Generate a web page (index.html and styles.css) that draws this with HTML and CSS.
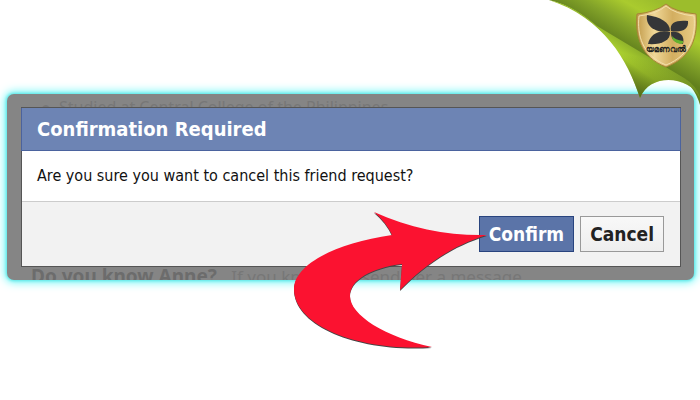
FILE: index.html
```html
<!DOCTYPE html>
<html lang="en">

<head>
    <meta charset="UTF-8">
    <meta name="viewport" content="width=device-width, initial-scale=1.0">
    <title>Confirmation Required</title>
    <link rel="stylesheet" href="styles.css">
</head>

<body>
    <main class="page">
        <div class="frame">
            <p class="behind behind-top">&#9679;&nbsp; Studied at Central College of the Philippines</p>
            <section class="dialog" role="dialog" aria-labelledby="dialogTitle">
                <h1 class="dialog-title" id="dialogTitle">Confirmation Required</h1>
                <p class="dialog-message">Are you sure you want to cancel this friend request?</p>
                <div class="dialog-buttons">
                    <button type="button" class="btn btn-confirm">Confirm</button>
                    <button type="button" class="btn btn-cancel">Cancel</button>
                </div>
            </section>
            <p class="behind behind-bottom"><b>Do you know Anne?</b> If you know her, send her a message.</p>
        </div>

        <!-- arrow pointing at the confirm button -->
        <svg class="arrow" viewBox="290 208 200 144" aria-hidden="true">
            <path d="M487 235C450 236 411 229 374 212Q386 222 392 235C335 243 294 265 294 289C294 326 360 352 432 347C385 337 350 315 350 296C350 280 371 268 402 264L400 290C422 268 448 247 487 235Z" />
        </svg>
    </main>

    <!-- page curl with logo -->
    <svg class="curl" viewBox="545 0 155 110" aria-hidden="true">
        <defs>
            <linearGradient id="back" gradientUnits="userSpaceOnUse" x1="618" y1="42" x2="645" y2="-6">
                <stop offset="0" stop-color="#62801d" />
                <stop offset=".35" stop-color="#83a329" />
                <stop offset=".7" stop-color="#aacb2e" />
                <stop offset="1" stop-color="#9cbd2c" />
            </linearGradient>
            <linearGradient id="fold" gradientUnits="userSpaceOnUse" x1="622" y1="80" x2="646" y2="46">
                <stop offset="0" stop-color="#8cae28" />
                <stop offset=".45" stop-color="#b0d62f" />
                <stop offset="1" stop-color="#7b9c27" />
            </linearGradient>
            <linearGradient id="tip" gradientUnits="userSpaceOnUse" x1="650" y1="60" x2="640" y2="98">
                <stop offset="0" stop-color="#536b18" stop-opacity="0" />
                <stop offset="1" stop-color="#536b18" />
            </linearGradient>
            <linearGradient id="gold" x1="0" y1="0" x2="1" y2="0">
                <stop offset="0" stop-color="#c19a49" />
                <stop offset=".3" stop-color="#f0d898" />
                <stop offset=".6" stop-color="#d3ae60" />
                <stop offset="1" stop-color="#e9cd87" />
            </linearGradient>
        </defs>
        <path fill="url(#back)" d="M549 0H700V105Q694 84 677 76L600 30Q577 7 549 0Z" />
        <path fill="url(#fold)" d="M549 0C574 6 586 17 597 26L684 78Q696 85 700 98C690 76 650 72 640 98C628 61 604 18 549 0Z" />
        <path fill="url(#tip)" d="M549 0C574 6 586 17 597 26L684 78Q696 85 700 98C690 76 650 72 640 98C628 61 604 18 549 0Z" />
        <path fill="url(#gold)" stroke="#a88439" d="M666 4Q675 12 696 14C698 35 693 57 666 67C640 57 635 35 637 14Q656 12 666 4Z" />
        <path fill="none" stroke="#f3dfac" d="M666 6Q675 14 694 16C696 35 691 55 666 65C642 55 637 35 639 16Q656 14 666 6Z" />
        <g fill="#343638">
            <path d="M670 31C657 34 645 27 647 15C660 17 670 22 670 31Z" />
            <path d="M671 31C669 22 677 20 688 21C689 29 682 33 671 31Z" />
            <path d="M670 32C671 41 660 45 648 44C650 35 657 30 670 32Z" />
            <path d="M671 32C680 31 685 36 683 44C674 42 671 40 671 32Z" />
        </g>
        <path fill="#65b22e" d="M672 36Q675 40 683 41Q684 44 680 44Q672 42 672 36Z" />
        <text class="logo-text" x="666" y="52" text-anchor="middle">യമണവൽ</text>
    </svg>
</body>

</html>
```

FILE: styles.css
```css
/* CSS styles */
* {
    box-sizing: border-box;
}

body {
    margin: 0;
    background-color: #fff;
    color: #111;
    font-family: "DejaVu Sans Condensed", Tahoma, "Noto Sans", sans-serif;
}

.page {
    position: relative;
    min-height: 100vh;
    padding: 94px 6px 0 7px;
}

.frame {
    padding: 0 13px 0 14px;
    border-radius: 7px;
    background-color: #858585;
    box-shadow: 0 0 3px 1px #5ce6e6, 0 0 8px 3px #7ff8f8;
}

/* text of the page dimmed under the dialog */
.behind {
    height: 13px;
    margin: 0;
    overflow: hidden;
    color: #777;
    font-family: "Noto Sans", sans-serif;
    font-size: 16px;
    white-space: nowrap;
}

.behind-top {
    padding-left: 20px;
    line-height: 26px;
}

.behind-bottom {
    padding-left: 10px;
    font-size: 17px;
    line-height: 18px;
}

.behind-bottom b {
    margin-right: 10px;
    color: #6c6c6c;
    font-size: 19px;
}

.dialog {
    border: 1px solid #555;
    background-color: #fff;
}

.dialog-title {
    margin: 0 -1px;
    padding: 0 15px;
    border: 1px solid #4b639e;
    border-top: none;
    background-color: #6d84b4;
    color: #fff;
    font-size: 20px;
    line-height: 42px;
}

.dialog-message {
    margin: 0;
    padding: 0 15px;
    font-size: 16px;
    line-height: 50px;
}

.dialog-buttons {
    display: flex;
    justify-content: flex-end;
    gap: 6px;
    padding: 14px 16px;
    border-top: 1px solid #ccc;
    background-color: #f2f2f2;
}

.btn {
    height: 36px;
    padding: 0 9px;
    border: 1px solid #999;
    font-family: inherit;
    font-size: 19px;
    font-weight: bold;
    line-height: 32px;
    cursor: pointer;
}

.btn-confirm {
    border-color: #29447e;
    background-color: #5b74a8;
    color: #fff;
}

.btn-cancel {
    background: linear-gradient(#f8f8f8, #eee);
    color: #222;
}

.arrow {
    position: absolute;
    top: 208px;
    right: 210px;
    width: 200px;
    height: 144px;
    fill: #fb1230;
    filter: drop-shadow(0 1px 0 #444);
    pointer-events: none;
}

.curl {
    position: absolute;
    top: 0;
    right: 0;
    width: 155px;
    height: 110px;
}

.logo-text {
    fill: #222;
    font-size: 8px;
    font-weight: bold;
}
```
